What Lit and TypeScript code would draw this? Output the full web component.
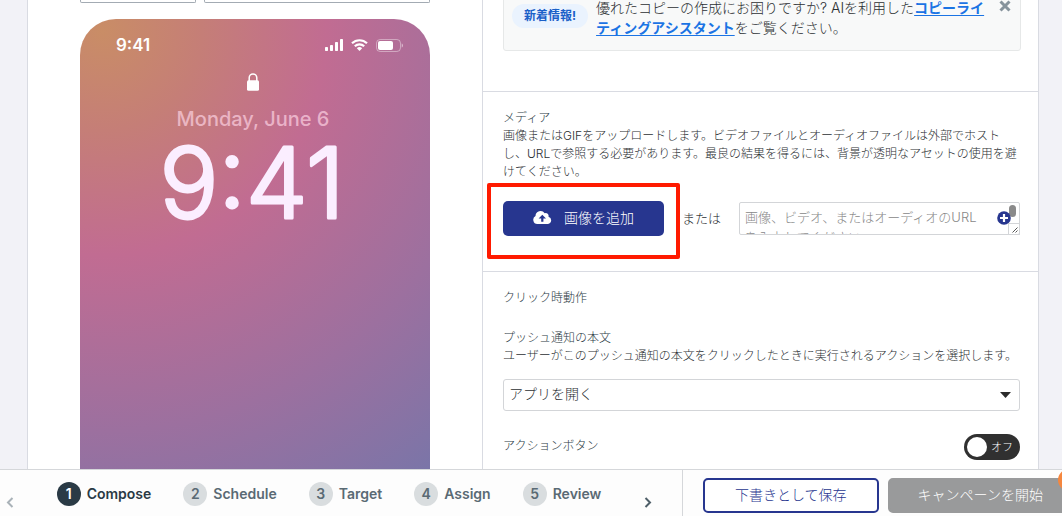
import { LitElement, html, css } from "lit";
import { customElement, property, state } from "lit/decorators.js";
import { classMap } from "lit/directives/class-map.js";

const base = css`
  *,
  *::before,
  *::after {
    box-sizing: border-box;
  }
  button,
  input,
  select,
  textarea {
    font: inherit;
    color: inherit;
    margin: 0;
  }
  button {
    cursor: pointer;
  }
  svg {
    display: block;
  }
`;

@customElement("phone-preview")
class PhonePreview extends LitElement {
  static styles = [
    base,
    css`
      :host {
        display: block;
      }
      .tabs {
        display: grid;
        grid-template-columns: 116fr 226fr;
        gap: 8px;
        height: 3px;
      }
      .tab {
        border: 1px solid #a3abb3;
        border-top: 0;
        border-radius: 0 0 2px 2px;
      }
      .phone {
        margin-top: 16px;
        aspect-ratio: 350 / 720;
        border-radius: 36px;
        color: #fff;
        background: radial-gradient(
          circle at 22px 12px,
          #c98d66 0,
          #c57e77 100px,
          #c16c92 224px,
          #9c709f 400px,
          #7a75a8 550px,
          #6d78ac 760px
        );
      }
      .status {
        display: flex;
        align-items: center;
        justify-content: space-between;
        padding: 16px 27px 0 36px;
        font-size: 17px;
        line-height: 20px;
        font-weight: 600;
      }
      .icons {
        display: flex;
        align-items: center;
        gap: 8px;
      }
      .lock-screen {
        display: flex;
        flex-direction: column;
        align-items: center;
        padding: 18px 4px 0 0;
      }
      .date {
        margin-top: 16px;
        font-size: 20px;
        line-height: 24px;
        font-weight: 500;
        color: rgba(255, 214, 230, 0.68);
      }
      .clock {
        overflow: visible;
      }
      .clock text {
        font-size: 98px;
        font-weight: 300;
        fill: #fbeeff;
        stroke: #fbeeff;
        stroke-width: 3px;
        stroke-linejoin: round;
        text-anchor: middle;
      }
    `,
  ];

  render() {
    return html`
      <div class="tabs">
        <div class="tab"></div>
        <div class="tab"></div>
      </div>
      <div class="phone">
        <div class="status">
          <span>9:41</span>
          <span class="icons">
            <svg width="18" height="12" viewBox="0 0 18 12" fill="#fff">
              <rect x="0" y="8" width="3" height="4" rx="0.7" />
              <rect x="5" y="6" width="3" height="6" rx="0.7" />
              <rect x="10" y="3" width="3" height="9" rx="0.7" />
              <rect x="15" y="0" width="3" height="12" rx="0.7" />
            </svg>
            <svg width="17" height="12" viewBox="0 0 17 12" fill="none" stroke="#fff" stroke-width="2.2">
              <path d="M1 4.3a10.8 10.8 0 0 1 15 0" />
              <path d="M3.8 7.3a6.8 6.8 0 0 1 9.4 0" />
              <path d="M8.5 12 5.8 9.3a4 4 0 0 1 5.4 0z" fill="#fff" stroke="none" />
            </svg>
            <svg width="27" height="13" viewBox="0 0 27 13">
              <rect x="0.5" y="0.5" width="24" height="12" rx="3.6" fill="none" stroke="#fff" stroke-opacity=".4" />
              <rect x="2" y="2" width="15" height="9" rx="2" fill="#fff" />
              <path d="M25.7 4.5v4c.8-.3 1.3-1.1 1.3-2s-.5-1.7-1.3-2z" fill="#fff" fill-opacity=".5" />
            </svg>
          </span>
        </div>
        <div class="lock-screen">
          <svg width="12" height="18" viewBox="0 0 12 18">
            <path d="M2.2 8V4.8a3.8 3.8 0 0 1 7.600 0V8" fill="none" stroke="#fff" stroke-width="1.5" />
            <rect x="0" y="7.2" width="12" height="10.500" rx="1.5" fill="#fff" />
          </svg>
          <div class="date">Monday, June 6</div>
          <svg class="clock" width="220" height="120" viewBox="0 0 220 120">
            <text x="109" y="87">9:41</text>
          </svg>
        </div>
      </div>
    `;
  }
}

@customElement("campaign-form")
class CampaignForm extends LitElement {
  @state() private actionButtons = false;

  static styles = [
    base,
    css`
      :host {
        display: block;
        font-size: 12px;
        line-height: 18px;
        font-weight: 300;
        color: #2c3033;
      }
      p,
      h3 {
        margin: 0;
        font-size: inherit;
        font-weight: inherit;
      }
      h3,
      .label {
        color: #2c3b45;
      }
      .section {
        border-top: 1px solid #d9dbe2;
        padding: 17px 18px 35px 20px;
      }
      .section.scrolled {
        border-top: 0;
        margin-top: -14px;
        padding: 0 17px 40px 20px;
      }
      .notice {
        display: flex;
        align-items: flex-start;
        padding: 11px 9px 12px 8px;
        border: 1px solid #e6e8e8;
        border-radius: 3px;
        background: #f8f9f9;
      }
      .badge {
        flex: none;
        margin: 6px 8px 0 0;
        padding: 0 12px;
        border-radius: 12px;
        background: #eaf3fe;
        color: #1a60c8;
        font-weight: 700;
        line-height: 24px;
      }
      .notice p {
        flex: 1;
        font-size: 14px;
        line-height: 20px;
      }
      .notice a {
        color: #1b74e4;
        font-weight: 700;
        text-underline-offset: 2px;
      }
      .close {
        flex: none;
        margin-top: 2px;
        margin-left: 10px;
        padding: 0;
        border: 0;
        background: none;
      }
      .upload {
        display: flex;
        align-items: center;
        margin-top: 20px;
        font-size: 13px;
      }
      .target {
        position: relative;
      }
      .target::after {
        content: "";
        position: absolute;
        inset: -18px -16px -23px -16px;
        border: 4px solid #ff1a00;
        border-radius: 2px;
        pointer-events: none;
      }
      .add {
        display: flex;
        align-items: center;
        gap: 12px;
        height: 35px;
        padding: 0 30px 2px;
        border: 0;
        border-radius: 5px;
        background: #27368f;
        color: #fff;
        font-size: 14px;
      }
      .or {
        margin: 0 18px;
        padding-bottom: 2px;
      }
      .url {
        position: relative;
        flex: 1;
        display: flex;
      }
      textarea {
        flex: 1;
        min-width: 0;
        height: 33px;
        padding: 4px 34px 0 5px;
        border: 1px solid #d3d5d8;
        border-radius: 2px;
        line-height: 20px;
        resize: none;
        overflow: hidden;
        background: #fff;
      }
      textarea::placeholder {
        color: #888;
      }
      .thumb {
        position: absolute;
        top: 3px;
        right: 4px;
        width: 7px;
        height: 12px;
        border-radius: 4px;
        background: #8a8a8a;
      }
      .grip {
        position: absolute;
        right: 0;
        bottom: 0;
        border: 1px solid #d3d5d8;
      }
      .plus {
        position: absolute;
        top: 9px;
        right: 9px;
        padding: 0;
        border: 0;
        background: none;
      }
      .label {
        display: block;
        margin-top: 22px;
      }
      .select {
        position: relative;
        margin-top: 14px;
      }
      select {
        display: block;
        width: 100%;
        height: 32px;
        padding: 0 28px 2px 5px;
        border: 1px solid #d3d5d8;
        border-radius: 3px;
        background: #fff;
        appearance: none;
        font-size: 14px;
      }
      .caret {
        position: absolute;
        top: 13px;
        right: 9px;
        pointer-events: none;
      }
      .toggle-row {
        display: flex;
        align-items: center;
        justify-content: space-between;
        margin-top: 23px;
        color: #2c3b45;
      }
      .toggle-row label {
        padding-bottom: 2px;
      }
      .toggle {
        position: relative;
        display: flex;
        align-items: center;
        gap: 4px;
        width: 56px;
        height: 26px;
        padding: 0 3px;
        border-radius: 13px;
        background: #303030;
        color: #fff;
        font-size: 11px;
      }
      .toggle.on {
        flex-direction: row-reverse;
        background: #27368f;
      }
      .toggle input {
        position: absolute;
        inset: 0;
        opacity: 0;
      }
      .knob {
        width: 20px;
        height: 20px;
        border-radius: 50%;
        background: #fff;
      }
    `,
  ];

  render() {
    return html`
      <div class="section scrolled">
        <div class="notice">
          <span class="badge">新着情報!</span>
          <p>
            優れたコピーの作成にお困りですか? AIを利用した<a href="#copy">コピーライティングアシスタント</a>をご覧ください。
          </p>
          <button class="close" aria-label="閉じる">
            <svg width="12" height="12" viewBox="0 0 12 12" stroke="#86939c" stroke-width="3">
              <path d="M1.5 1.5l9 9M10.5 1.5l-9 9" />
            </svg>
          </button>
        </div>
      </div>

      <div class="section">
        <h3><label for="media-url">メディア</label></h3>
        <p>画像またはGIFをアップロードします。ビデオファイルとオーディオファイルは外部でホストし、URLで参照する必要があります。最良の結果を得るには、背景が透明なアセットの使用を避けてください。</p>
        <div class="upload">
          <div class="target">
            <button class="add">
              <svg width="19" height="13" viewBox="0 0 19 13">
                <path
                  d="M4.3 13A4.2 4.2 0 0 1 2.500 5.100 5.100 5.100 0 0 1 11.700 2.200a2.900 2.900 0 0 1 3.800 3.500A3.750 3.750 0 0 1 15 13z"
                  fill="#fff"
                />
                <path d="M9.3 3.8 13 7.500h-2.600v3.300H8.200V7.500H5.600z" fill="#27368f" />
              </svg>
              画像を追加
            </button>
          </div>
          <span class="or">または</span>
          <div class="url">
            <textarea id="media-url" placeholder="画像、ビデオ、またはオーディオのURLを入力してください"></textarea>
            <span class="thumb"></span>
            <svg class="grip" width="12" height="12" viewBox="0 0 10 10" stroke="#555" stroke-width="1">
              <path d="M3.5 8.5l5-5M6.500 8.500l2-2" />
            </svg>
            <button class="plus" aria-label="変数を追加">
              <svg width="14" height="14" viewBox="0 0 14 14">
                <circle cx="7" cy="7" r="6.8" fill="#27368f" />
                <path d="M7 3v8M3 7h8" stroke="#fff" stroke-width="2.2" />
              </svg>
            </button>
          </div>
        </div>
      </div>

      <div class="section">
        <h3>クリック時動作</h3>
        <label class="label" for="on-click">プッシュ通知の本文</label>
        <p>ユーザーがこのプッシュ通知の本文をクリックしたときに実行されるアクションを選択します。</p>
        <div class="select">
          <select id="on-click">
            <option>アプリを開く</option>
          </select>
          <svg class="caret" width="11" height="6" viewBox="0 0 11 6">
            <path d="M0 0h11L5.5 6z" fill="#2b2b2b" />
          </svg>
        </div>
        <div class="toggle-row">
          <label for="action-buttons">アクションボタン</label>
          <span class=${classMap({ toggle: true, on: this.actionButtons })}>
            <input
              id="action-buttons"
              type="checkbox"
              role="switch"
              .checked=${this.actionButtons}
              @change=${(e: Event) => (this.actionButtons = (e.target as HTMLInputElement).checked)}
            />
            <span class="knob"></span>
            <span>${this.actionButtons ? "オン" : "オフ"}</span>
          </span>
        </div>
      </div>
    `;
  }
}

@customElement("step-bar")
class StepBar extends LitElement {
  @property({ type: Number }) current = 0;
  private steps = ["Compose", "Schedule", "Target", "Assign", "Review"];

  static styles = [
    base,
    css`
      :host {
        display: flex;
        background: #fdfdfd;
        border-top: 1px solid #d5d7da;
        height: 47px;
      }
      nav {
        flex: 1;
        display: flex;
        justify-content: space-between;
        padding: 0 30px 0 6px;
        border-right: 1px solid #d5d7da;
      }
      ol {
        display: flex;
        gap: 32px;
        align-self: flex-start;
        list-style: none;
        margin: 12px 0 0;
        padding: 0;
      }
      .step {
        display: flex;
        align-items: center;
        gap: 6px;
        color: #5a6a74;
        text-decoration: none;
        font-size: 14px;
        line-height: 24px;
        font-weight: 600;
      }
      .num {
        width: 24px;
        border-radius: 50%;
        background: #d9dddf;
        text-align: center;
      }
      .step.active {
        color: #2a3a45;
      }
      .step.active .num {
        background: #2a3a45;
        color: #fff;
      }
      .arrow {
        display: flex;
        padding: 27px 0 0;
        border: 0;
        background: none;
      }
      .actions {
        flex: none;
        display: flex;
        gap: 9px;
        width: 379px;
        padding: 8px 0 3px 20px;
        overflow: hidden;
      }
      .actions button {
        flex: none;
        height: 35px;
        padding: 0 30px 2px;
        border: 2px solid #27368f;
        border-radius: 5px;
        background: #fff;
        color: #27368f;
        font-size: 14px;
        line-height: 20px;
        font-weight: 300;
      }
      .actions .launch {
        padding: 0 28px 2px;
        border-color: #999a9b;
        background: #999a9b;
        color: #fff;
      }
    `,
  ];

  render() {
    return html`
      <nav>
        <button class="arrow" aria-label="前へ">
          <svg width="8" height="11" viewBox="0 0 8 11" fill="none" stroke="#a9b2b8" stroke-width="2">
            <path d="M6.5 1 2 5.5l4.500 4.500" />
          </svg>
        </button>
        <ol>
          ${this.steps.map(
            (name, i) => html`<li>
              <a class=${classMap({ step: true, active: i === this.current })} href="#step">
                <span class="num">${i + 1}</span>${name}
              </a>
            </li>`
          )}
        </ol>
        <button class="arrow" aria-label="次へ">
          <svg width="8" height="11" viewBox="0 0 8 11" fill="none" stroke="#4f5f69" stroke-width="2">
            <path d="M1.5 1 6 5.5 1.5 10" />
          </svg>
        </button>
      </nav>
      <div class="actions">
        <button>下書きとして保存</button>
        <button class="launch">キャンペーンを開始</button>
      </div>
    `;
  }
}

@customElement("app-root")
class AppRoot extends LitElement {
  static styles = [
    base,
    css`
      :host {
        position: relative;
        display: flex;
        flex-direction: column;
        height: 100vh;
        overflow: hidden;
        background: #f2f2f7;
        font-family: Inter, "Noto Sans CJK JP", sans-serif;
      }
      main {
        flex: 1;
        min-height: 0;
        overflow: hidden;
        display: grid;
        grid-template-columns: 454px 1fr;
        margin: 0 23px 0 27px;
        background: #fff;
        border: solid #d9dbe2;
        border-width: 0 1px;
      }
      phone-preview {
        padding: 0 52px;
      }
      campaign-form {
        border-left: 1px solid #d9dbe2;
      }
      .bubble {
        position: absolute;
        right: -18px;
        bottom: 25px;
        width: 22px;
        height: 22px;
        border-radius: 50%;
        background: #f5873f;
      }
    `,
  ];

  render() {
    return html`
      <main>
        <phone-preview></phone-preview>
        <campaign-form></campaign-form>
      </main>
      <step-bar></step-bar>
      <div class="bubble"></div>
    `;
  }
}
